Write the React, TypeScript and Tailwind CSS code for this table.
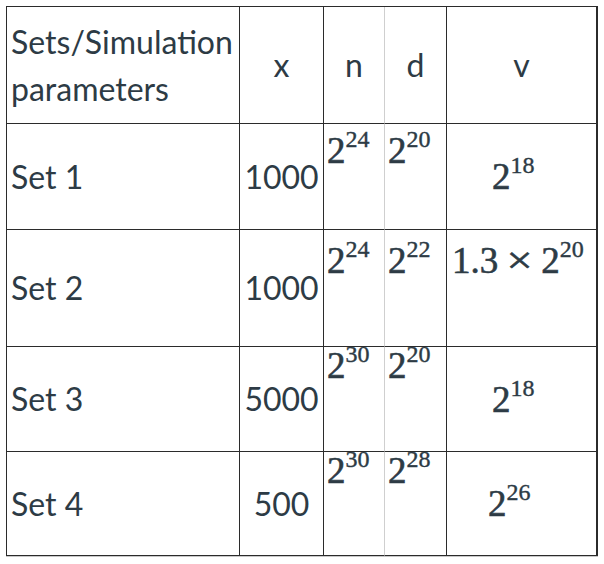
import type { ReactNode } from 'react'

const text = "font-['Lato',sans-serif] text-[32px] text-[#2d3b45]"
const serif =
  "font-['Liberation_Serif','DejaVu_Serif',serif] text-[37px] leading-none text-[#2d3b45] whitespace-nowrap [-webkit-text-stroke:0.6px_#2d3b45]"

function Pow({ base, exp }: { base: string; exp: string }) {
  return (
    <span className={serif}>
      {base}
      <span className="relative top-[-16px] text-[24px] leading-none [-webkit-text-stroke:0.4px_#2d3b45]">{exp}</span>
    </span>
  )
}

function Cell({ children, className = '' }: { children?: ReactNode; className?: string }) {
  return <div className={`flex border-r border-b border-[#2b2b2b] ${className}`}>{children}</div>
}

type Row = {
  label: string
  x: string
  n: string
  d: string
  v: ReactNode
  vClass: string
  mathPad: string
}

const rows: Row[] = [
  { label: 'Set 1', x: '1000', n: '24', d: '20', v: <Pow base="2" exp="18" />, vClass: 'items-center pl-[45px]', mathPad: 'pt-[8px]' },
  {
    label: 'Set 2',
    x: '1000',
    n: '24',
    d: '22',
    v: (
      <span className={serif}>
        1.3<span className="mx-[11px] inline-block scale-x-125">×</span>2
        <span className="relative top-[-16px] text-[24px] leading-none [-webkit-text-stroke:0.4px_#2d3b45]">20</span>
      </span>
    ),
    vClass: 'items-start pl-[5px] pt-[12px]',
    mathPad: 'pt-[12px]',
  },
  { label: 'Set 3', x: '5000', n: '30', d: '20', v: <Pow base="2" exp="18" />, vClass: 'items-center pl-[45px]', mathPad: 'pt-[0px]' },
  { label: 'Set 4', x: '500', n: '30', d: '28', v: <Pow base="2" exp="26" />, vClass: 'items-center pl-[41px]', mathPad: 'pt-[0px]' },
]

const heights = ['h-[106px]', 'h-[117px]', 'h-[105px]', 'h-[104px]']

export default function App() {
  return (
    <div className="min-h-[564px] w-[604px] bg-white pl-[6px] pt-[6px]">
      <div className="grid w-[592px] grid-cols-[233px_84px_61px_62px_151px] border-l border-t border-[#2b2b2b] shadow-[0_1px_0_#c8c8c8]">
        {/* header */}
        <Cell className={`h-[117px] items-center pl-[4px] ${text} leading-[47px]`}>
          <span>
            Sets/Simulation
            <br />
            parameters
          </span>
        </Cell>
        <Cell className={`h-[117px] items-center justify-center ${text}`}>x</Cell>
        <Cell className={`h-[117px] items-center justify-center !border-r-[#cfcfcf] ${text}`}>n</Cell>
        <Cell className={`h-[117px] items-center justify-center ${text}`}>d</Cell>
        <Cell className={`h-[117px] items-center justify-center border-r-2 ${text}`}>v</Cell>

        {rows.map((r, i) => (
          <div key={r.label} className="contents">
            <Cell className={`${heights[i]} items-center pl-[4px] ${text}`}>{r.label}</Cell>
            <Cell className={`${heights[i]} items-center justify-center ${text}`}>{r.x}</Cell>
            <Cell className={`${heights[i]} items-start pl-[3px] !border-r-[#cfcfcf] ${r.mathPad}`}>
              <Pow base="2" exp={r.n} />
            </Cell>
            <Cell className={`${heights[i]} items-start pl-[3px] ${r.mathPad}`}>
              <Pow base="2" exp={r.d} />
            </Cell>
            <Cell className={`${heights[i]} border-r-2 ${r.vClass}`}>{r.v}</Cell>
          </div>
        ))}
      </div>
    </div>
  )
}
